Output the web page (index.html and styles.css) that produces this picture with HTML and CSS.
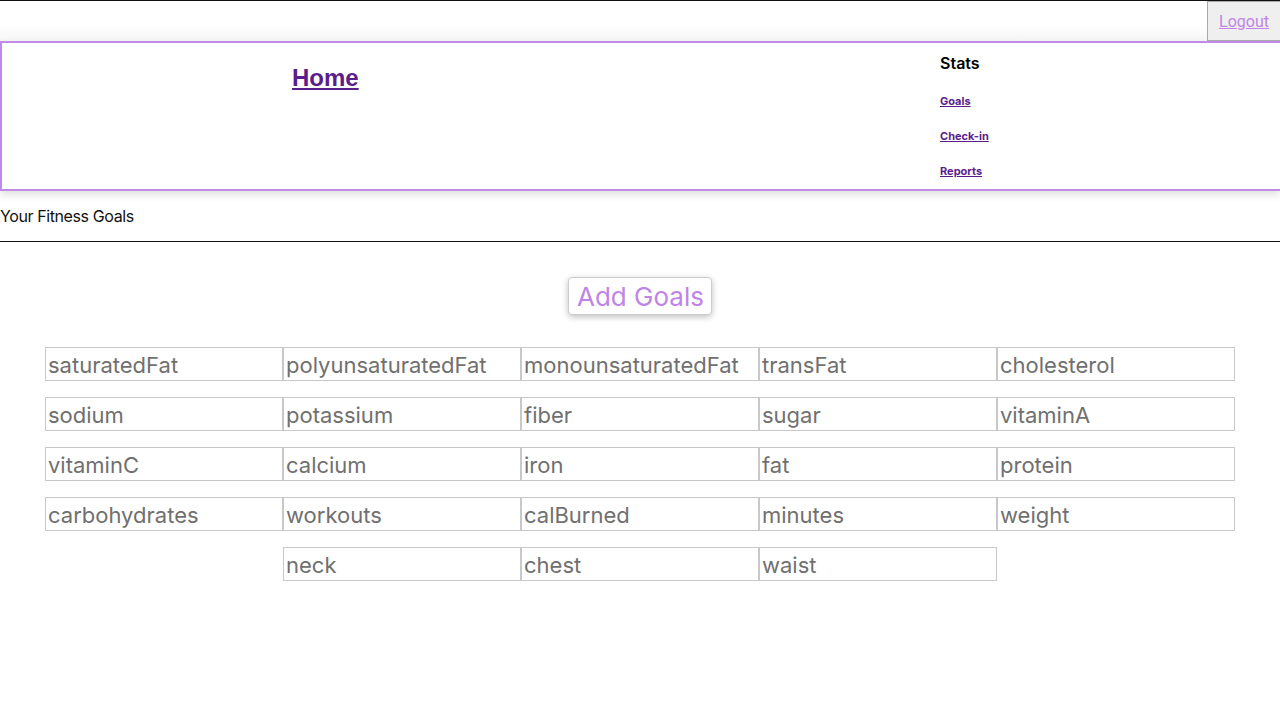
FILE: index.html
```html
<!DOCTYPE html>
<html>
<head>
<meta charset="utf-8">
<link rel="stylesheet" href="styles.css">
</head>
<body>
<div class="topbar">
  <button class="logout"><a href="#">Logout</a></button>
</div>
<nav class="nav">
  <div class="home-col"><a class="home" href="#">Home</a></div>
  <div class="stats-col">
    <div class="stats-title">Stats</div>
    <a class="sub" href="#">Goals</a>
    <a class="sub" href="#">Check-in</a>
    <a class="sub" href="#">Reports</a>
  </div>
</nav>
<div class="page-title">Your Fitness Goals</div>
<hr class="rule">
<div class="add-wrap"><button class="add">Add Goals</button></div>
<div class="grid">
  <div class="cell">saturatedFat</div>
  <div class="cell">polyunsaturatedFat</div>
  <div class="cell">monounsaturatedFat</div>
  <div class="cell">transFat</div>
  <div class="cell">cholesterol</div>
  <div class="cell">sodium</div>
  <div class="cell">potassium</div>
  <div class="cell">fiber</div>
  <div class="cell">sugar</div>
  <div class="cell">vitaminA</div>
  <div class="cell">vitaminC</div>
  <div class="cell">calcium</div>
  <div class="cell">iron</div>
  <div class="cell">fat</div>
  <div class="cell">protein</div>
  <div class="cell">carbohydrates</div>
  <div class="cell">workouts</div>
  <div class="cell">calBurned</div>
  <div class="cell">minutes</div>
  <div class="cell">weight</div>
  <div class="cell">neck</div>
  <div class="cell">chest</div>
  <div class="cell">waist</div>
</div>
</body>
</html>
```
FILE: styles.css
```css
html, body {
  margin: 0;
  padding: 0;
  background: #fff;
  font-family: Inter, "Noto Sans", sans-serif;
  overflow-x: hidden;
}
.topbar {
  height: 40px;
  border-top: 1px solid #111;
  background: linear-gradient(#fff 0%, #fff 60%, #f6f6f6 100%);
  display: flex;
  justify-content: flex-end;
}
.logout {
  width: 73px;
  height: 40px;
  margin: 0;
  padding: 0;
  background: #efefef;
  border: 1px solid #a9a9a9;
  border-right: none;
  font-family: Roboto, "Liberation Sans", sans-serif;
  font-size: 16px;
}
.logout a {
  color: #c084e8;
}
.nav {
  height: 146px;
  border: 2px solid #c08ae8;
  border-right: none;
  background: #fff;
  box-shadow: 0 4px 8px rgba(0,0,0,0.12);
  display: flex;
}
.home-col {
  width: 938px;
  padding-left: 290px;
  padding-top: 21px;
  box-sizing: border-box;
}
.home {
  font-family: "Liberation Sans", Arial, sans-serif;
  font-weight: bold;
  font-size: 24px;
  color: #5a1e8c;
}
.stats-col {
  display: flex;
  flex-direction: column;
  padding-top: 10px;
}
.stats-title {
  font-weight: 600;
  font-size: 16px;
  line-height: 20px;
  color: #000;
  margin-bottom: 21px;
}
.sub {
  font-size: 11px;
  font-weight: 700;
  color: #5a1e8c;
  line-height: 14px;
  margin-bottom: 21px;
}
.page-title {
  font-size: 16px;
  letter-spacing: -0.4px;
  color: #111;
  padding-top: 15px;
  line-height: 20px;
  height: 35px;
}
.rule {
  margin: 0;
  border: none;
  border-top: 1px solid #111;
}
.add-wrap {
  display: flex;
  justify-content: center;
  padding-top: 35px;
}
.add {
  height: 38px;
  padding: 0 7px 0 8px;
  background: #fff;
  border: 1px solid #ccc;
  border-radius: 4px;
  box-shadow: 0 2px 6px rgba(0,0,0,0.25);
  font-family: Inter, sans-serif;
  font-size: 26px;
  color: #c084e8;
}
.grid {
  display: flex;
  flex-wrap: wrap;
  justify-content: center;
  row-gap: 16px;
  padding: 32px 45px 0;
}
.cell {
  width: 238px;
  height: 34px;
  box-sizing: border-box;
  border: 1px solid #c8c8c8;
  padding: 1px 2px 0;
  font-size: 22px;
  line-height: 32px;
  color: #707070;
}
```
